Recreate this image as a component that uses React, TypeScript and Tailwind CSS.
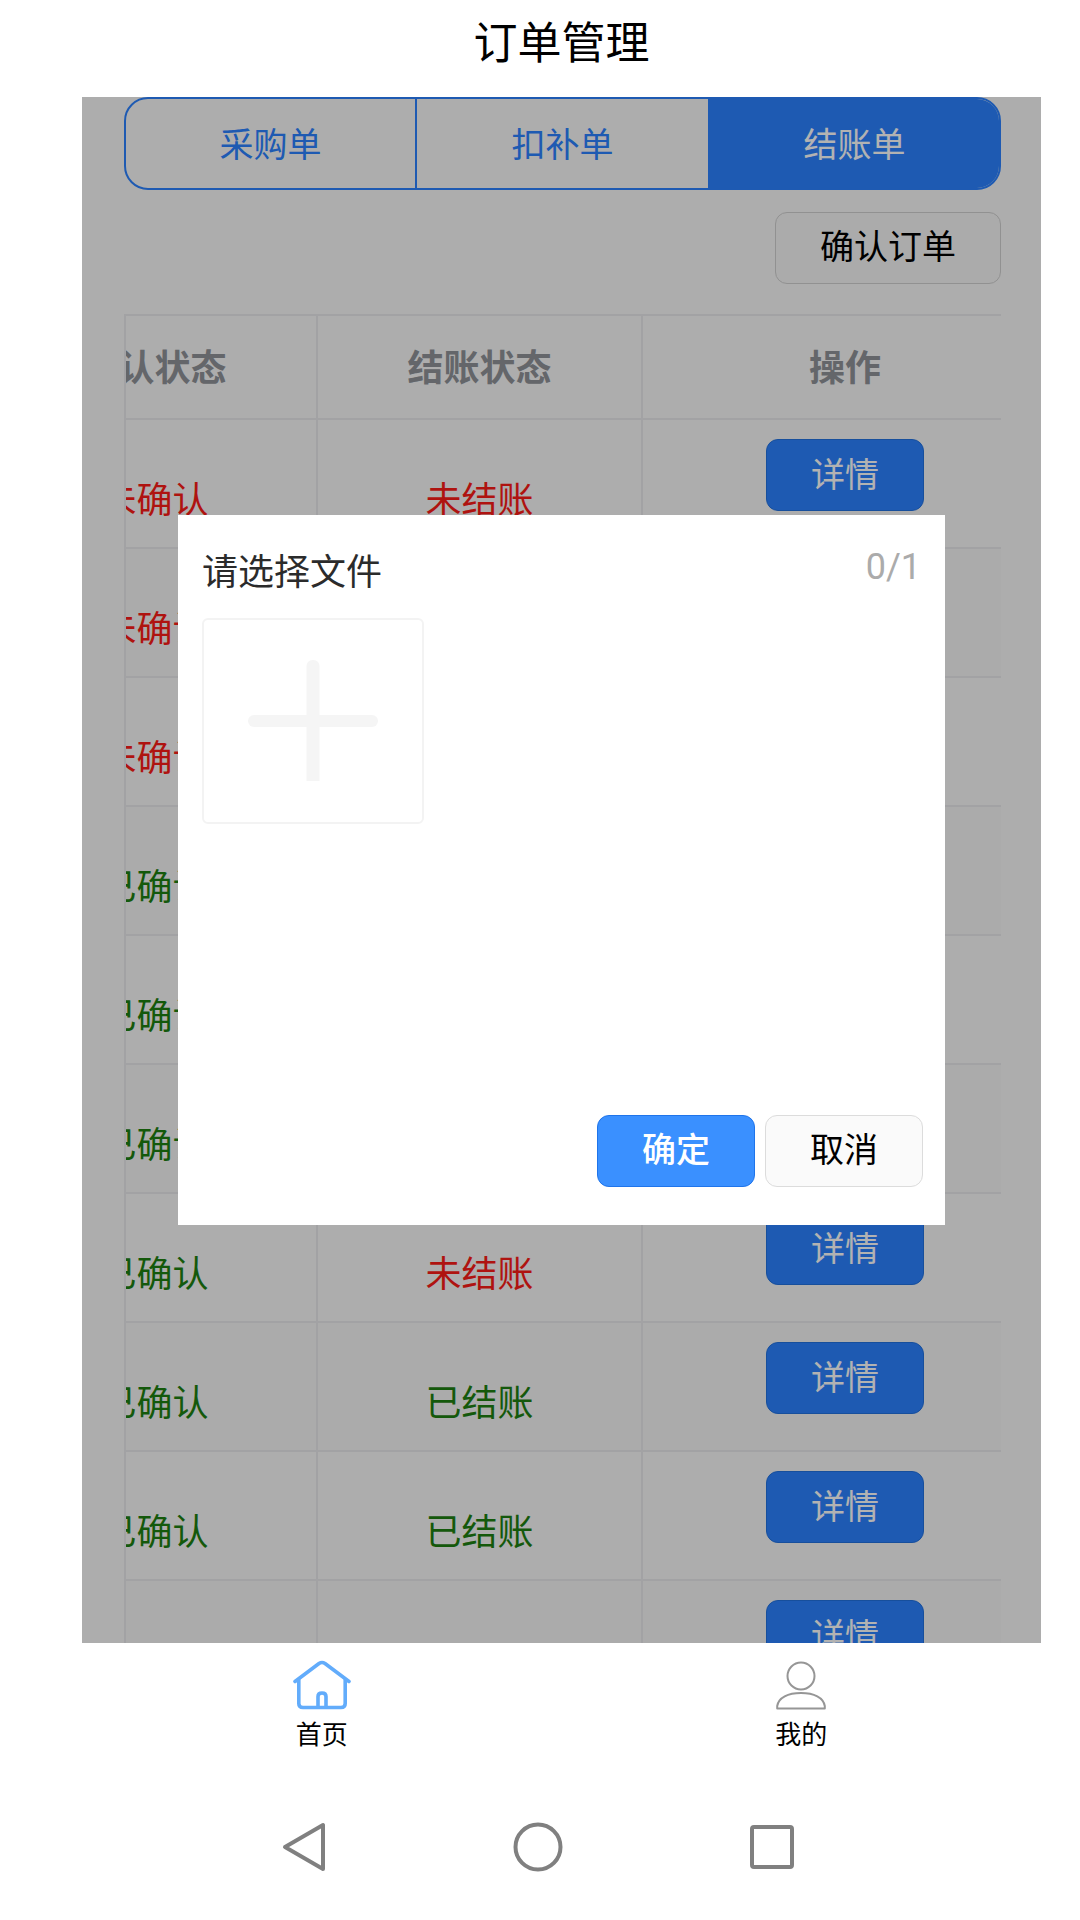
import React, { useLayoutEffect, useRef, useState } from 'react';
import clsx from 'clsx';

interface Order {
  id: number;
  confirmed: boolean;
  settled: boolean;
}

const TABS = ['采购单', '扣补单', '结账单'];

const ORDERS: Order[] = [
  { id: 1, confirmed: false, settled: false },
  { id: 2, confirmed: false, settled: false },
  { id: 3, confirmed: false, settled: false },
  { id: 4, confirmed: true, settled: false },
  { id: 5, confirmed: true, settled: false },
  { id: 6, confirmed: true, settled: false },
  { id: 7, confirmed: true, settled: false },
  { id: 8, confirmed: true, settled: true },
  { id: 9, confirmed: true, settled: true },
  { id: 10, confirmed: true, settled: true },
];

const Tabs: React.FC<{ active: string; onChange: (tab: string) => void }> = ({ active, onChange }) => (
  <div className="grid h-[93px] shrink-0 grid-cols-3 overflow-hidden rounded-3xl border-2 border-[#2b82ff] bg-[#f8f8f8]">
    {TABS.map((tab) => (
      <button
        key={tab}
        type="button"
        onClick={() => onChange(tab)}
        className={clsx(
          'border-[#2b82ff] pb-0.5 text-[34px] leading-[48px] first:border-r-2 last:border-l-2',
          tab === active ? 'bg-[#2b82ff] text-white' : 'text-[#2b82ff]'
        )}
      >
        {tab}
      </button>
    ))}
  </div>
);

const Status: React.FC<{ done: boolean; label: string }> = ({ done, label }) => (
  <span className={done ? 'text-[#1d8011]' : 'text-[#fb1c17]'}>
    {done ? '已' : '未'}
    {label}
  </span>
);

const OrderTable: React.FC = () => {
  const scrollRef = useRef<HTMLDivElement>(null);

  // start with the status and action columns in view
  useLayoutEffect(() => {
    if (scrollRef.current) scrollRef.current.scrollLeft = 133;
  }, []);

  return (
    <div
      ref={scrollRef}
      className="mt-[30px] shrink-0 overflow-x-auto border-t-2 border-l-2 border-[#e9e9eb] [scrollbar-width:none]"
    >
      <table className="w-[1054px] table-fixed border-separate border-spacing-0 text-center text-[36px] leading-[50px]">
        <colgroup>
          <col className="w-[325px]" />
          <col className="w-[325px]" />
          <col className="w-[404px]" />
        </colgroup>
        <thead>
          <tr className="h-[104px] text-[#909399]">
            <th className="border-r-2 border-b-2 border-[#e9e9eb] pb-1 font-bold">确认状态</th>
            <th className="border-r-2 border-b-2 border-[#e9e9eb] pb-1 font-bold">结账状态</th>
            <th className="border-b-2 border-[#e9e9eb] pb-1 font-bold">操作</th>
          </tr>
        </thead>
        <tbody>
          {ORDERS.map((order) => (
            <tr key={order.id} className="h-[129px] even:bg-[#f5f5f5]">
              <td className="border-r-2 border-b-2 border-[#e9e9eb] pt-[26px]">
                <Status done={order.confirmed} label="确认" />
              </td>
              <td className="border-r-2 border-b-2 border-[#e9e9eb] pt-[26px]">
                <Status done={order.settled} label="结账" />
              </td>
              <td className="border-b-2 border-[#e9e9eb] pt-[19px] align-top">
                <button
                  type="button"
                  className="mx-auto block h-[72px] w-[158px] rounded-xl border border-[#2271e0] bg-[#2b82ff] pb-1 text-[34px] leading-[48px] text-white"
                >
                  详情
                </button>
              </td>
            </tr>
          ))}
        </tbody>
      </table>
    </div>
  );
};

const UploadDialog: React.FC = () => (
  <div
    role="dialog"
    aria-labelledby="upload-title"
    className="flex h-[710px] w-4/5 flex-col bg-white px-6 pt-6 pb-[38px]"
  >
    <div className="flex items-start justify-between">
      <h2 id="upload-title" className="pt-[5px] text-[36px] leading-[50px] text-[#2b2b2b]">
        请选择文件
      </h2>
      <span className="font-[Roboto] text-[36px] leading-[56px] text-[#ababab]">0/1</span>
    </div>
    <button
      type="button"
      aria-label="添加文件"
      className="mt-[23px] flex h-[206px] w-[222px] items-center justify-center rounded-md border-2 border-[#f3f3f3]"
    >
      <svg viewBox="0 0 130 122" className="h-[122px] w-[130px]" fill="#f5f5f5">
        <rect x="0" y="55" width="130" height="12" rx="6" />
        <path d="M58.500 121V6a6 6 0 0 1 6-6h1a6 6 0 0 1 6 6V121z" />
      </svg>
    </button>
    <div className="mt-auto -mr-0.5 flex justify-end gap-2.5">
      <button
        type="button"
        className="h-[72px] w-[158px] rounded-xl border border-[#1f74ea] bg-[#3a90ff] pb-1.5 text-[34px] leading-[48px] font-medium text-white"
      >
        确定
      </button>
      <button
        type="button"
        className="h-[72px] w-[158px] rounded-xl border border-[#dcdcdc] bg-[#fafafa] pb-1.5 text-[34px] leading-[48px] text-black"
      >
        取消
      </button>
    </div>
  </div>
);

const HomeIcon: React.FC = () => (
  <svg
    viewBox="0 0 58 50"
    className="h-[50px] w-[58px]"
    fill="none"
    stroke="#62acfb"
    strokeWidth="3.600"
    strokeLinecap="round"
    strokeLinejoin="round"
  >
    <path d="M2 21.500L26 3.500Q29 1.500 32 3.500L56 21.500" />
    <path d="M5.800 20V43.500Q5.800 47.500 10 47.500H48Q52.200 47.500 52.200 43.500V20" />
    <path d="M25 47V36.500Q25 33 29 33Q33 33 33 36.500V47" />
  </svg>
);

const UserIcon: React.FC = () => (
  <svg viewBox="0 0 50 50" className="h-[50px] w-[50px]" fill="none" stroke="#969696" strokeWidth="2" strokeLinejoin="round">
    <circle cx="25" cy="16" r="13.500" />
    <path d="M1.200 48.500V46C2.500 37.500 12 33 25 33S47.500 37.500 48.800 46V48.500Z" />
  </svg>
);

const App: React.FC = () => {
  const [tab, setTab] = useState('结账单');

  return (
    <div className="flex h-screen flex-col bg-white font-['Noto_Sans_CJK_SC',sans-serif] text-black">
      <div className="flex min-h-0 flex-1 flex-col pr-[39px] pl-[82px]">
        <header className="flex h-[97px] shrink-0 justify-center pt-2.5">
          <h1 className="text-[44px] leading-[60px]">订单管理</h1>
        </header>

        <main className="relative flex min-h-0 flex-1 flex-col overflow-hidden bg-[#f8f8f8] pr-10 pl-[42px]">
          <Tabs active={tab} onChange={setTab} />
          <button
            type="button"
            className="mt-[22px] h-[72px] w-[226px] shrink-0 self-end rounded-xl border border-[#d0d0d0] bg-[#f5f5f5] pb-1.5 text-[34px] leading-[48px]"
          >
            确认订单
          </button>
          <OrderTable />
          <div className="absolute inset-0 flex items-center justify-center bg-black/30">
            <UploadDialog />
          </div>
        </main>

        <nav className="flex h-[137px] shrink-0 text-[26px] leading-[36px]">
          <a href="#home" className="flex flex-1 flex-col items-center gap-[5px] pt-[17px]">
            <HomeIcon />
            首页
          </a>
          <a href="#mine" className="flex flex-1 flex-col items-center gap-[5px] pt-[17px]">
            <UserIcon />
            我的
          </a>
        </nav>
      </div>

      <div className="flex h-[140px] shrink-0 items-center justify-center gap-[182px] pr-1 pb-1.5">
        <button type="button" aria-label="返回">
          <svg viewBox="0 0 52 52" className="h-[52px] w-[52px]" fill="none" stroke="#808080" strokeWidth="4" strokeLinejoin="round">
            <path d="M45 4V48L7 26Z" />
          </svg>
        </button>
        <button type="button" aria-label="主屏幕">
          <svg viewBox="0 0 52 52" className="h-[52px] w-[52px]" fill="none" stroke="#808080" strokeWidth="4">
            <circle cx="26" cy="26" r="22.500" />
          </svg>
        </button>
        <button type="button" aria-label="最近任务">
          <svg viewBox="0 0 52 52" className="h-[52px] w-[52px]" fill="none" stroke="#808080" strokeWidth="4">
            <rect x="6" y="6" width="40" height="40" rx="2" />
          </svg>
        </button>
      </div>
    </div>
  );
};

export default App;
